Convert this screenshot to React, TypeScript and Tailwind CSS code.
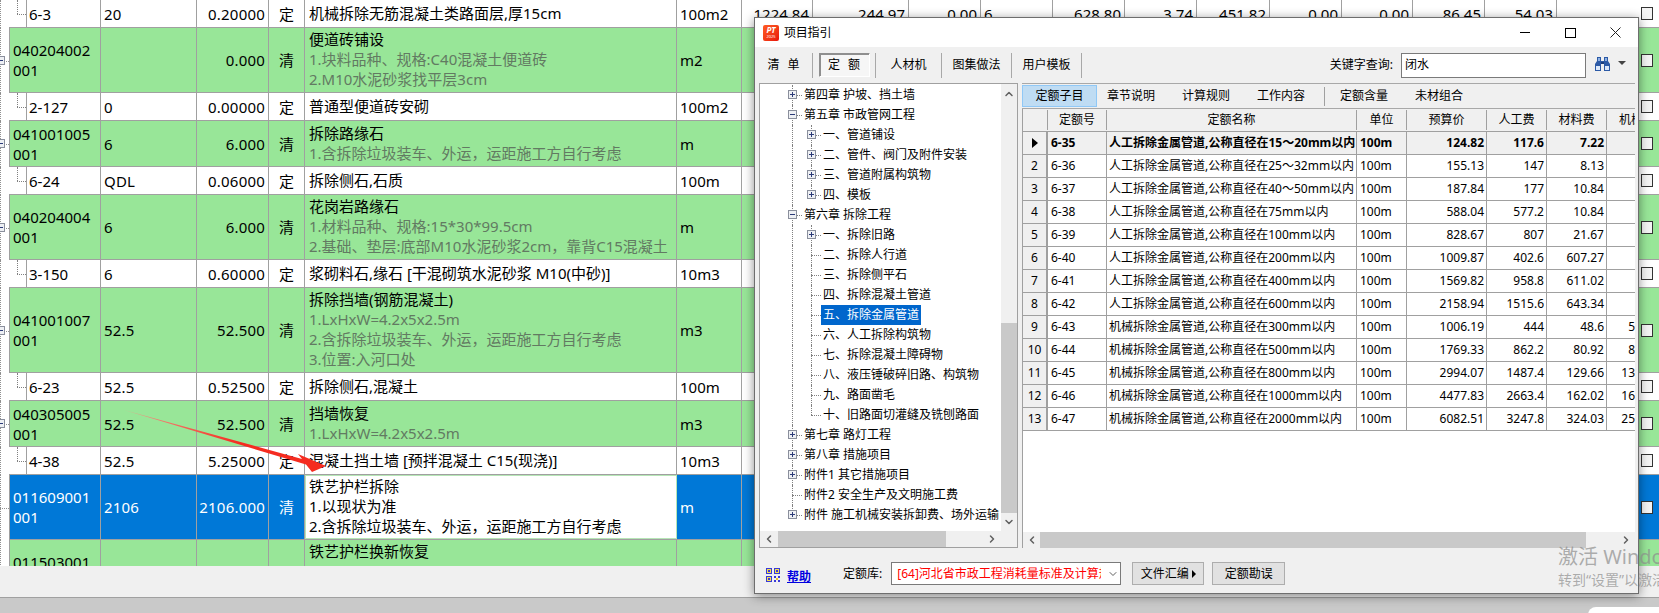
import React from "react"
import { ChevronDown, ChevronLeft, ChevronRight, ChevronUp } from "lucide-react"

type Row = {
  kind: "child" | "item" | "selected"
  height: string
  code: string[]
  qty: string
  amount: string
  type: string
  desc: string[]
  unit: string
}

const EMPTY = ["", "", "", "", "", "", "", "", "", "", ""]

const rows: Row[] = [
  { kind: "child", height: "h-[28px]", code: ["6-3"], qty: "20", amount: "0.20000", type: "定", desc: ["机械拆除无筋混凝土类路面层,厚15cm"], unit: "100m2" },
  { kind: "item", height: "h-[65px]", code: ["040204002", "001"], qty: "", amount: "0.000", type: "清", desc: ["便道砖铺设", "1.块料品种、规格:C40混凝土便道砖", "2.M10水泥砂浆找平层3cm"], unit: "m2" },
  { kind: "child", height: "h-[28px]", code: ["2-127"], qty: "0", amount: "0.00000", type: "定", desc: ["普通型便道砖安砌"], unit: "100m2" },
  { kind: "item", height: "h-[46px]", code: ["041001005", "001"], qty: "6", amount: "6.000", type: "清", desc: ["拆除路缘石", "1.含拆除垃圾装车、外运，运距施工方自行考虑"], unit: "m" },
  { kind: "child", height: "h-[28px]", code: ["6-24"], qty: "QDL", amount: "0.06000", type: "定", desc: ["拆除侧石,石质"], unit: "100m" },
  { kind: "item", height: "h-[65px]", code: ["040204004", "001"], qty: "6", amount: "6.000", type: "清", desc: ["花岗岩路缘石", "1.材料品种、规格:15*30*99.5cm", "2.基础、垫层:底部M10水泥砂浆2cm，靠背C15混凝土"], unit: "m" },
  { kind: "child", height: "h-[28px]", code: ["3-150"], qty: "6", amount: "0.60000", type: "定", desc: ["浆砌料石,缘石 [干混砌筑水泥砂浆 M10(中砂)]"], unit: "10m3" },
  { kind: "item", height: "h-[85px]", code: ["041001007", "001"], qty: "52.5", amount: "52.500", type: "清", desc: ["拆除挡墙(钢筋混凝土)", "1.LxHxW=4.2x5x2.5m", "2.含拆除垃圾装车、外运，运距施工方自行考虑", "3.位置:入河口处"], unit: "m3" },
  { kind: "child", height: "h-[28px]", code: ["6-23"], qty: "52.5", amount: "0.52500", type: "定", desc: ["拆除侧石,混凝土"], unit: "100m" },
  { kind: "item", height: "h-[46px]", code: ["040305005", "001"], qty: "52.5", amount: "52.500", type: "清", desc: ["挡墙恢复", "1.LxHxW=4.2x5x2.5m"], unit: "m3" },
  { kind: "child", height: "h-[28px]", code: ["4-38"], qty: "52.5", amount: "5.25000", type: "定", desc: ["混凝土挡土墙 [预拌混凝土 C15(现浇)]"], unit: "10m3" },
  { kind: "selected", height: "h-[65px]", code: ["011609001", "001"], qty: "2106", amount: "2106.000", type: "清", desc: ["铁艺护栏拆除", "1.以现状为准", "2.含拆除垃圾装车、外运，运距施工方自行考虑"], unit: "m" },
  // only the top of this row is visible, the rest is behind the status strip
  { kind: "item", height: "h-[65px]", code: ["011503001", "001"], qty: "", amount: "", type: "", desc: ["铁艺护栏换新恢复", "", ""], unit: "" },
]

const firstExtras = ["1224.84", "244.97", "0.00", "6", "628.80", "3.74", "451.82", "0.00", "0.00", "86.45", "54.03"]

type TreeItem = { text: string; level: 1 | 2; box?: "plus" | "minus"; last?: boolean; selected?: boolean; end?: boolean }

const tree: TreeItem[] = [
  { text: "第四章 护坡、挡土墙", level: 1, box: "plus" },
  { text: "第五章 市政管网工程", level: 1, box: "minus" },
  { text: "一、管道铺设", level: 2, box: "plus" },
  { text: "二、管件、阀门及附件安装", level: 2, box: "plus" },
  { text: "三、管道附属构筑物", level: 2, box: "plus" },
  { text: "四、模板", level: 2, box: "plus", last: true },
  { text: "第六章 拆除工程", level: 1, box: "minus" },
  { text: "一、拆除旧路", level: 2, box: "plus" },
  { text: "二、拆除人行道", level: 2 },
  { text: "三、拆除侧平石", level: 2 },
  { text: "四、拆除混凝土管道", level: 2 },
  { text: "五、拆除金属管道", level: 2, selected: true },
  { text: "六、人工拆除构筑物", level: 2 },
  { text: "七、拆除混凝土障碍物", level: 2 },
  { text: "八、液压锤破碎旧路、构筑物", level: 2 },
  { text: "九、路面凿毛", level: 2 },
  { text: "十、旧路面切灌缝及铣刨路面", level: 2, last: true },
  { text: "第七章 路灯工程", level: 1, box: "plus" },
  { text: "第八章 措施项目", level: 1, box: "plus" },
  { text: "附件1 其它措施项目", level: 1, box: "plus" },
  { text: "附件2 安全生产及文明施工费", level: 1 },
  { text: "附件 施工机械安装拆卸费、场外运输", level: 1, box: "plus", end: true },
]

const quotas = [
  ["6-35", "人工拆除金属管道,公称直径在15～20mm以内", "124.82", "117.6", "7.22", ""],
  ["6-36", "人工拆除金属管道,公称直径在25～32mm以内", "155.13", "147", "8.13", ""],
  ["6-37", "人工拆除金属管道,公称直径在40～50mm以内", "187.84", "177", "10.84", ""],
  ["6-38", "人工拆除金属管道,公称直径在75mm以内", "588.04", "577.2", "10.84", ""],
  ["6-39", "人工拆除金属管道,公称直径在100mm以内", "828.67", "807", "21.67", ""],
  ["6-40", "人工拆除金属管道,公称直径在200mm以内", "1009.87", "402.6", "607.27", ""],
  ["6-41", "人工拆除金属管道,公称直径在400mm以内", "1569.82", "958.8", "611.02", ""],
  ["6-42", "人工拆除金属管道,公称直径在600mm以内", "2158.94", "1515.6", "643.34", ""],
  ["6-43", "机械拆除金属管道,公称直径在300mm以内", "1006.19", "444", "48.6", "5"],
  ["6-44", "机械拆除金属管道,公称直径在500mm以内", "1769.33", "862.2", "80.92", "8"],
  ["6-45", "机械拆除金属管道,公称直径在800mm以内", "2994.07", "1487.4", "129.66", "13"],
  ["6-46", "机械拆除金属管道,公称直径在1000mm以内", "4477.83", "2663.4", "162.02", "16"],
  ["6-47", "机械拆除金属管道,公称直径在2000mm以内", "6082.51", "3247.8", "324.03", "25"],
]

const SHEET_COLS = "grid-cols-[92px_96px_72px_36px_372px_65px_71px_96px_72px_72px_72px_72px_73px_72px_71px_72px_72px_1fr]"
const QUOTA_COLS = "grid-cols-[25px_59px_250px_50px_80px_60px_60px_1fr]"

function ExpandBox({ type }: { type: "plus" | "minus" }) {
  return (
    <svg width="9" height="9" viewBox="0 0 9 9" className="block">
      <rect x="0.5" y="0.5" width="8" height="8" fill="#eef0f4" stroke="#8a8f9c" />
      <path d="M2 4.5H7" stroke="#2b3a78" />
      {type === "plus" && <path d="M4.5 2V7" stroke="#2b3a78" />}
    </svg>
  )
}

function SheetRow({ row, index }: { row: Row; index: number }) {
  const extras = index === 0 ? firstExtras : EMPTY
  const bg =
    row.kind === "child" ? "bg-white text-black" : row.kind === "item" ? "bg-[#98e698] text-black" : "bg-[#0078d7] text-white"
  return (
    <div className={`flex ${row.height} w-[1659px]`}>
      <div className="relative w-[9px] shrink-0 bg-white">
        <div className="absolute left-0 top-0 h-full border-l border-dotted border-[#909090]" />
        {row.kind !== "child" && (
          <div className="absolute left-0 top-1/2 w-[9px] border-t border-dotted border-[#909090]" />
        )}
        {row.kind === "item" && (
          <div className="absolute left-[-4px] top-[calc(50%-5px)]">
            <ExpandBox type="minus" />
          </div>
        )}
      </div>
      <div className={`grid flex-1 ${SHEET_COLS} border-b border-[#a0a0a0] ${bg} [&>div]:border-r [&>div]:border-[#a0a0a0]`}>
        {row.kind === "child" ? (
          <div className="flex bg-white">
            <div className="relative w-[18px] shrink-0 border-r border-[#a0a0a0]">
              <div className="absolute left-[8px] top-0 h-1/2 border-l border-dotted border-[#808080]" />
              <div className="absolute left-[8px] top-1/2 w-[9px] border-t border-dotted border-[#808080]" />
            </div>
            <div className="flex items-center pl-[2px]">{row.code[0]}</div>
          </div>
        ) : (
          <div className="flex flex-col justify-center border-l pl-[3px]">
            {row.code.map((c) => (
              <div key={c}>{c}</div>
            ))}
          </div>
        )}
        <div className="flex items-center pl-[3px] tracking-[0.2px]">{row.qty}</div>
        <div className="flex items-center justify-end pr-[3px] tracking-[0.2px]">{row.amount}</div>
        <div className="flex items-center justify-center border-r-2">{row.type}</div>
        <div
          className={`flex flex-col justify-center pb-[2px] pl-[4px] ${
            row.kind === "selected" ? "bg-white text-black outline outline-[#b6e6b6] outline-offset-[-1px]" : ""
          }`}
        >
          {row.desc.map((d, i) => (
            <div key={i} className={`min-h-5 whitespace-nowrap ${row.kind === "item" && i > 0 ? "text-[#627a62]" : ""}`}>
              {d}
            </div>
          ))}
        </div>
        <div className="flex items-center pl-[3px]">{row.unit}</div>
        {extras.map((v, i) => (
          <div key={i} className={`flex items-center ${i === 3 ? "pl-[3px]" : "justify-end pr-[3px]"}`}>
            {v}
          </div>
        ))}
        <div className="flex items-center justify-end !border-r-0 pr-[6px]">
          <div className="h-[13px] w-[12px] shrink-0 border border-[#333333] bg-[#f4f4f4]" />
        </div>
      </div>
    </div>
  )
}

function TreeRow({ item }: { item: TreeItem }) {
  const label = item.selected ? "ml-[-2px] bg-[#0066cc] px-[2px] text-white" : ""
  const outer = item.end ? "h-1/2" : "h-full"
  if (item.level === 1) {
    return (
      <div className="flex h-5 shrink-0 items-center pl-[32px]">
        <div className="relative h-full w-[12px] shrink-0">
          <div className={`absolute left-0 top-0 ${outer} border-l border-dotted border-[#808080]`} />
          <div className="absolute left-0 top-1/2 w-[10px] border-t border-dotted border-[#808080]" />
          {item.box && (
            <div className="absolute left-[-4px] top-[5px]">
              <ExpandBox type={item.box} />
            </div>
          )}
        </div>
        <span className="whitespace-nowrap leading-5">{item.text}</span>
      </div>
    )
  }
  return (
    <div className="flex h-5 shrink-0 items-center pl-[32px]">
      <div className="h-full w-[19px] shrink-0 border-l border-dotted border-[#808080]" />
      <div className="relative h-full w-[12px] shrink-0">
        <div className={`absolute left-0 top-0 ${item.last ? "h-1/2" : "h-full"} border-l border-dotted border-[#808080]`} />
        <div className="absolute left-0 top-1/2 w-[10px] border-t border-dotted border-[#808080]" />
        {item.box && (
          <div className="absolute left-[-4px] top-[5px]">
            <ExpandBox type={item.box} />
          </div>
        )}
      </div>
      <span className={`whitespace-nowrap leading-5 ${label}`}>{item.text}</span>
    </div>
  )
}

function Binoculars() {
  return (
    <svg width="17" height="14" viewBox="0 0 17 14" className="block">
      <path d="M3 0h4v4h3V0h4v4l2 3v7h-6V7H7v7H1V7l2-3z" fill="#2c5aa6" />
      <rect x="4" y="1" width="2" height="3" fill="#8fb2e4" />
      <rect x="11" y="1" width="2" height="3" fill="#8fb2e4" />
      <rect x="2" y="9" width="4" height="4" fill="#dbe8fa" />
      <rect x="11" y="9" width="4" height="4" fill="#dbe8fa" />
      <rect x="7" y="5" width="3" height="2" fill="#1d3f7c" />
    </svg>
  )
}

function QrIcon() {
  return (
    <svg width="14" height="14" viewBox="0 0 14 14" className="block">
      <g fill="#f4e04d" stroke="#3a3ad8">
        <rect x="0.5" y="0.5" width="5" height="5" />
        <rect x="8.5" y="0.5" width="5" height="5" />
        <rect x="0.5" y="8.5" width="5" height="5" />
      </g>
      <rect x="2" y="2" width="2" height="2" fill="#3a3ad8" />
      <rect x="10" y="2" width="2" height="2" fill="#3a3ad8" />
      <rect x="2" y="10" width="2" height="2" fill="#3a3ad8" />
      <rect x="8" y="8" width="2" height="2" fill="#3a3ad8" />
      <rect x="12" y="8" width="2" height="2" fill="#3a3ad8" />
      <rect x="10" y="10" width="2" height="2" fill="#f0c020" />
      <rect x="8" y="12" width="2" height="2" fill="#3a3ad8" />
      <rect x="12" y="12" width="2" height="2" fill="#3a3ad8" />
    </svg>
  )
}

function Dialog() {
  return (
    <div className="absolute left-[754px] top-[17px] flex h-[577px] w-[885px] flex-col border border-[#6e6e6e] bg-[#f0f0f0] text-[12px] text-black shadow-[0_2px_10px_rgba(0,0,0,0.45)]">
      {/* title bar */}
      <div className="flex h-[29px] shrink-0 items-center bg-white pl-[8px]">
        <div className="flex h-4 w-4 flex-col items-center justify-center rounded-[2px] bg-linear-to-br from-[#ff5a24] to-[#e80f0a] text-white">
          <span className="text-[8px] font-bold italic leading-[8px]">PT</span>
          <span className="text-[4px] leading-[5px]">2025</span>
        </div>
        <span className="ml-[5px] tracking-[-0.2px]">项目指引</span>
        <div className="ml-auto flex items-center">
          <div className="h-px w-[10px] bg-black" />
          <div className="ml-[35px] h-[10px] w-[11px] border border-black" />
          <svg width="11" height="11" viewBox="0 0 11 11" className="ml-[34px] mr-[17px] block">
            <path d="M0.5 0.5L10.5 10.5M10.5 0.5L0.5 10.5" stroke="#222222" />
          </svg>
        </div>
      </div>

      {/* toolbar */}
      <div className="flex h-[36px] shrink-0 items-center">
        <div className="flex h-[25px] w-[58px] items-center justify-center gap-2 border-r border-[#a8a8a8]">
          <span>清</span>
          <span>单</span>
        </div>
        <div className="flex h-[25px] w-[63px] items-center justify-center border-r border-[#a8a8a8]">
          <div className="flex h-[24px] w-[51px] items-center justify-center gap-2 border border-[#8f8f8f] border-b-white border-r-white bg-[#f6f6f6] shadow-[inset_1px_1px_0_#8f8f8f]">
            <span>定</span>
            <span>额</span>
          </div>
        </div>
        <div className="flex h-[25px] w-[66px] items-center justify-center border-r border-[#a8a8a8]">人材机</div>
        <div className="flex h-[25px] w-[70px] items-center justify-center border-r border-[#a8a8a8]">图集做法</div>
        <div className="flex h-[25px] w-[70px] items-center justify-center border-r border-[#a8a8a8]">用户模板</div>
        <span className="ml-auto">关键字查询:</span>
        <div className="ml-[8px] flex h-[25px] w-[185px] items-center border border-[#7a7a7a] bg-white pl-[3px]">闭水</div>
        <div className="mb-[3px] ml-[8px]">
          <Binoculars />
        </div>
        <div className="mb-[4px] ml-[7px] mr-[12px] h-0 w-0 border-x-[4px] border-t-[4px] border-x-transparent border-t-[#444444]" />
      </div>

      {/* panels */}
      <div className="flex h-[465px] shrink-0 gap-[4px] pl-[4px] pr-[3px]">
        <div className="flex w-[259px] shrink-0 flex-col border border-[#a0a0a0] bg-[#f0f0f0]">
          <div className="flex min-h-0 flex-1">
            <div className="flex flex-1 flex-col overflow-hidden bg-white pt-[1px]">
              {tree.map((t) => (
                <TreeRow key={t.text} item={t} />
              ))}
            </div>
            <div className="flex w-[16px] shrink-0 flex-col items-center">
              <ChevronUp size={12} strokeWidth={3} className="mt-[4px] shrink-0 text-[#606060]" />
              <div className="mt-[223px] w-full flex-1 bg-[#c9c9c9]" />
              <ChevronDown size={12} strokeWidth={3} className="my-[3px] shrink-0 text-[#606060]" />
            </div>
          </div>
          <div className="flex h-[16px] shrink-0 items-center">
            <ChevronLeft size={12} strokeWidth={3} className="ml-[3px] shrink-0 text-[#606060]" />
            <div className="ml-[3px] h-full w-[168px] bg-[#c9c9c9]" />
            <ChevronRight size={12} strokeWidth={3} className="ml-[40px] shrink-0 text-[#606060]" />
          </div>
        </div>

        <div className="flex min-w-0 flex-1 flex-col">
          <div className="flex h-[26px] shrink-0 items-center border-y border-[#a8a8a8]">
            <div className="flex h-[22px] w-[75px] items-center justify-center border border-[#90c8f6] bg-[#bfdcf3]">定额子目</div>
            <div className="ml-[10px] w-[48px]">章节说明</div>
            <div className="ml-[27px] w-[48px]">计算规则</div>
            <div className="ml-[27px] w-[48px]">工作内容</div>
            <div className="ml-[19px] h-[19px] w-px bg-[#a0a0a0]" />
            <div className="ml-[15px] w-[48px]">定额含量</div>
            <div className="ml-[27px] w-[48px]">未材组合</div>
          </div>
          <div className="flex min-h-0 flex-1 flex-col border-l border-[#a0a0a0] bg-white">
            <div className="min-h-0 flex-1 overflow-hidden">
              <div className={`grid h-[23px] ${QUOTA_COLS} items-center border-b border-[#a0a0a0] bg-[#f0f0f0] text-center`}>
                <div className="h-[20px] border-r border-[#a0a0a0]" />
                <div className="flex h-[20px] items-center justify-center border-r border-[#a0a0a0]">定额号</div>
                <div className="flex h-[20px] items-center justify-center border-r border-[#a0a0a0]">定额名称</div>
                <div className="flex h-[20px] items-center justify-center border-r border-[#a0a0a0]">单位</div>
                <div className="flex h-[20px] items-center justify-center border-r border-[#a0a0a0]">预算价</div>
                <div className="flex h-[20px] items-center justify-center border-r border-[#a0a0a0]">人工费</div>
                <div className="flex h-[20px] items-center justify-center border-r border-[#a0a0a0]">材料费</div>
                <div className="flex h-[20px] items-center justify-start overflow-hidden whitespace-nowrap pl-[12px]">机械费</div>
              </div>
              {quotas.map((q, i) => (
                <div
                  key={q[0]}
                  className={`grid h-[23px] ${QUOTA_COLS} items-stretch border-b border-[#a0a0a0] [&>div]:flex [&>div]:items-center ${
                    i === 0 ? "bg-[#f0f0f0] font-bold" : ""
                  }`}
                >
                  <div className="justify-center border-r-2 border-[#a0a0a0] bg-[#f0f0f0] font-normal">
                    {i === 0 ? <div className="h-0 w-0 border-y-[5px] border-l-[6px] border-y-transparent border-l-black" /> : i + 1}
                  </div>
                  <div className="border-r border-[#a0a0a0] pl-[3px]">{q[0]}</div>
                  <div className="overflow-hidden whitespace-nowrap border-r border-[#a0a0a0] pl-[2px]">{q[1]}</div>
                  <div className="border-r border-[#a0a0a0] pl-[3px]">100m</div>
                  <div className="justify-end border-r border-[#a0a0a0] pr-[2px]">{q[2]}</div>
                  <div className="justify-end border-r border-[#a0a0a0] pr-[2px]">{q[3]}</div>
                  <div className="justify-end border-r border-[#a0a0a0] pr-[2px]">{q[4]}</div>
                  <div className="justify-end pr-[0px]">{q[5]}</div>
                </div>
              ))}
            </div>
            <div className="flex h-[16px] shrink-0 items-center bg-[#f0f0f0]">
              <ChevronLeft size={12} strokeWidth={3} className="ml-[3px] shrink-0 text-[#606060]" />
              <div className="ml-[2px] h-full w-[546px] bg-[#c9c9c9]" />
              <ChevronRight size={12} strokeWidth={3} className="ml-[34px] shrink-0 text-[#606060]" />
            </div>
          </div>
        </div>
      </div>

      {/* bottom bar */}
      <div className="flex flex-1 items-start pl-[11px] pt-[14px]">
        <div className="mt-[6px]">
          <QrIcon />
        </div>
        <a className="ml-[7px] mt-[5px] font-bold text-[#0000e0] underline">帮助</a>
        <span className="ml-[32px] mt-[2px]">定额库:</span>
        <div className="ml-[9px] flex h-[23px] w-[230px] items-center border border-[#7a7a7a] bg-white pl-[5px] text-[#ff0000]">
          <span className="w-[204px] overflow-hidden whitespace-nowrap">[64]河北省市政工程消耗量标准及计算规则</span>
          <ChevronDown size={12} className="ml-[6px] shrink-0 text-[#606060]" />
        </div>
        <div className="ml-[11px] flex h-[23px] w-[72px] items-center justify-center gap-[3px] border border-[#adadad] bg-[#e1e1e1]">
          文件汇编
          <div className="h-0 w-0 border-y-[4px] border-l-[4px] border-y-transparent border-l-black" />
        </div>
        <div className="ml-[8px] flex h-[23px] w-[73px] items-center justify-center border border-[#adadad] bg-[#e1e1e1]">定额勘误</div>
      </div>
    </div>
  )
}

export default function App() {
  return (
    <div className="relative h-[613px] w-full overflow-hidden bg-[#c9c9c9] font-['Noto_Sans','Noto_Sans_CJK_SC',sans-serif] text-[15px] leading-5">
      <div className="h-[566px] overflow-hidden bg-white">
        {rows.map((r, i) => (
          <SheetRow key={r.code[0]} row={r} index={i} />
        ))}
      </div>
      <div className="h-[32px] border-b border-[#a0a0a0] bg-[#f0f0f0]" />

      <svg width="340" height="80" viewBox="0 0 340 80" className="absolute left-0 top-[400px]">
        <defs>
          <linearGradient id="arrowTail" x1="124" y1="10" x2="240" y2="43" gradientUnits="userSpaceOnUse">
            <stop offset="0" stopColor="#f0a090" />
            <stop offset="1" stopColor="#f52c20" />
          </linearGradient>
        </defs>
        <polygon points="124,10 302,59 298,54 326,66 312,72 306,64.5" fill="url(#arrowTail)" />
      </svg>

      <Dialog />

      {/* rounded corner of the window behind */}
      <div className="absolute left-[1588px] top-[607px] h-[20px] w-[90px] rounded-tl-[8px] bg-white" />

      {/* windows activation watermark */}
      <div className="pointer-events-none absolute left-[1558px] top-[545px] whitespace-nowrap text-[#8c8c8c]/70">
        <div className="text-[20px] leading-[24px]">激活 Windows</div>
        <div className="mt-[2px] text-[14px] leading-[18px]">转到“设置”以激活 Windows。</div>
      </div>
    </div>
  )
}
